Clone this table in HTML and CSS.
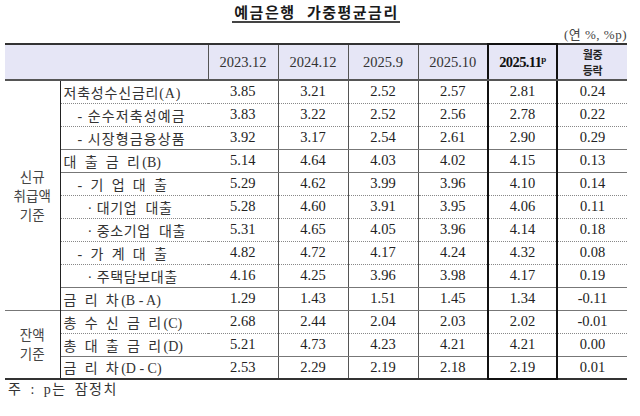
FILE: index.html
```html
<!DOCTYPE html>
<html lang="ko">
<head>
<meta charset="utf-8">
<title>예금은행 가중평균금리</title>
<link rel="stylesheet" href="styles.css">
</head>
<body>
<div class="page">
  <div class="title"><span class="title-text">예금은행&nbsp; 가중평균금리</span></div>
  <div class="unit">(연 %, %p)</div>
  <table class="rates">
    <colgroup>
      <col class="c-group"><col class="c-label">
      <col class="c-num"><col class="c-num"><col class="c-num"><col class="c-num"><col class="c-hl"><col class="c-num">
    </colgroup>
    <thead>
      <tr class="head">
        <th colspan="2" class="h-blank"></th>
        <th class="vs">2023.12</th>
        <th class="vs">2024.12</th>
        <th class="vs">2025.9</th>
        <th class="vd">2025.10</th>
        <th class="hl hl-top">2025.11<sup>p</sup></th>
        <th class="chg"><span class="chg-l">월중</span><span class="chg-l">등락</span></th>
      </tr>
    </thead>
    <tbody>
      <tr class="bd">
        <td rowspan="10" class="grp"><span class="grp-l">신규</span><span class="grp-l">취급액</span><span class="grp-l">기준</span></td>
        <td class="lbl ls08">저축성수신금리(A)</td>
        <td class="vs">3.85</td><td class="vs">3.21</td><td class="vs">2.52</td><td class="vd">2.57</td><td class="hl">2.81</td><td>0.24</td>
      </tr>
      <tr class="bd">
        <td class="lbl in1 ls1">- 순수저축성예금</td>
        <td class="vs">3.83</td><td class="vs">3.22</td><td class="vs">2.52</td><td class="vd">2.56</td><td class="hl">2.78</td><td>0.22</td>
      </tr>
      <tr class="bs">
        <td class="lbl in1 ls1">- 시장형금융상품</td>
        <td class="vs">3.92</td><td class="vs">3.17</td><td class="vs">2.54</td><td class="vd">2.61</td><td class="hl">2.90</td><td>0.29</td>
      </tr>
      <tr class="bs">
        <td class="lbl"><span class="ls2">대 출 금 리</span>(B)</td>
        <td class="vs">5.14</td><td class="vs">4.64</td><td class="vs">4.03</td><td class="vd">4.02</td><td class="hl">4.15</td><td>0.13</td>
      </tr>
      <tr class="bd">
        <td class="lbl in1 ls2">- 기 업 대 출</td>
        <td class="vs">5.29</td><td class="vs">4.62</td><td class="vs">3.99</td><td class="vd">3.96</td><td class="hl">4.10</td><td>0.14</td>
      </tr>
      <tr class="bd">
        <td class="lbl in2 ls05">· 대기업&nbsp; 대출</td>
        <td class="vs">5.28</td><td class="vs">4.60</td><td class="vs">3.91</td><td class="vd">3.95</td><td class="hl">4.06</td><td>0.11</td>
      </tr>
      <tr class="bd">
        <td class="lbl in2 ls05">· 중소기업&nbsp; 대출</td>
        <td class="vs">5.31</td><td class="vs">4.65</td><td class="vs">4.05</td><td class="vd">3.96</td><td class="hl">4.14</td><td>0.18</td>
      </tr>
      <tr class="bd">
        <td class="lbl in1 ls2">- 가 계 대 출</td>
        <td class="vs">4.82</td><td class="vs">4.72</td><td class="vs">4.17</td><td class="vd">4.24</td><td class="hl">4.32</td><td>0.08</td>
      </tr>
      <tr class="bs">
        <td class="lbl in2 ls05">· 주택담보대출</td>
        <td class="vs">4.16</td><td class="vs">4.25</td><td class="vs">3.96</td><td class="vd">3.98</td><td class="hl">4.17</td><td>0.19</td>
      </tr>
      <tr class="bs">
        <td class="lbl"><span class="ls2">금 리 차</span>(B - A)</td>
        <td class="vs">1.29</td><td class="vs">1.43</td><td class="vs">1.51</td><td class="vd">1.45</td><td class="hl">1.34</td><td>-0.11</td>
      </tr>
      <tr class="bd">
        <td rowspan="3" class="grp grp-top"><span class="grp-l">잔액</span><span class="grp-l">기준</span></td>
        <td class="lbl"><span class="ls2">총 수 신 금 리</span>(C)</td>
        <td class="vs">2.68</td><td class="vs">2.44</td><td class="vs">2.04</td><td class="vd">2.03</td><td class="hl">2.02</td><td>-0.01</td>
      </tr>
      <tr class="bs">
        <td class="lbl"><span class="ls2">총 대 출 금 리</span>(D)</td>
        <td class="vs">5.21</td><td class="vs">4.73</td><td class="vs">4.23</td><td class="vd">4.21</td><td class="hl">4.21</td><td>0.00</td>
      </tr>
      <tr class="last">
        <td class="lbl"><span class="ls2">금 리 차</span>(D - C)</td>
        <td class="vs">2.53</td><td class="vs">2.29</td><td class="vs">2.19</td><td class="vd">2.18</td><td class="hl hl-bot">2.19</td><td>0.01</td>
      </tr>
    </tbody>
  </table>
  <div class="note">주 : p는 잠정치</div>
</div>
</body>
</html>
```
FILE: styles.css
```css
html, body {
  margin: 0;
  padding: 0;
  background: #ffffff;
}
body {
  font-family: "Liberation Serif", "Noto Sans CJK KR", serif;
  color: #222;
}
.page {
  width: 622px;
  padding-left: 5px;
}
.title {
  height: 26px;
  display: flex;
  justify-content: center;
  align-items: flex-start;
}
.title-text {
  margin-top: 3px;
  font-family: "Noto Sans CJK KR", sans-serif;
  font-weight: 700;
  font-size: 15px;
  line-height: 18px;
  letter-spacing: 1.5px;
  color: #1a1a1a;
  border-bottom: 2px solid #444;
  padding: 0 1px 0 2px;
}
.unit {
  height: 17px;
  text-align: right;
  font-family: "Liberation Serif", "Noto Sans CJK KR", serif;
  font-size: 13px;
  line-height: 17px;
  color: #444;
  letter-spacing: 0.5px;
}
.rates {
  width: 622px;
  table-layout: fixed;
  border-collapse: collapse;
  border-top: 2px solid #333;
  border-bottom: 2px solid #333;
}
.c-group { width: 55px; }
.c-label { width: 148px; }
.c-num { width: 70px; }
.c-hl { width: 69px; }
.rates th, .rates td {
  padding: 0;
  text-align: center;
  font-size: 14.5px;
  font-weight: 400;
}
.head {
  height: 36px;
  background: #e6e6f6;
}
.head th {
  border-bottom: 2px solid #555;
  color: #333;
}
.h-blank {
  border-right: 1px solid #555;
}
.rates th.chg {
  font-family: "Noto Sans CJK KR", sans-serif;
  font-weight: 700;
  font-size: 11px;
  color: #222;
}
.chg-l {
  display: block;
  line-height: 16px;
  height: 16px;
  letter-spacing: -0.3px;
}
.hl {
  border-left: 2px solid #111;
  border-right: 2px solid #111;
}
th.hl {
  font-weight: 700;
  letter-spacing: -0.6px;
  color: #111;
}
th.hl sup {
  font-size: 9px;
  vertical-align: 5px;
  line-height: 0;
}
.hl-top { border-top: 2px solid #111; }
.hl-bot { border-bottom: 2px solid #111; }
.vs { border-right: 1px solid #555; }
.vd { border-right: 1px dotted #777; }
.rates tbody tr { height: 23px; }
.bd td { border-bottom: 1px dotted #888; }
.bs td { border-bottom: 1px solid #777; }
.rates tbody td.grp {
  border-bottom: none;
  border-right: 1px solid #222;
  font-family: "Noto Sans CJK KR", sans-serif;
  font-size: 13.5px;
  color: #444;
  vertical-align: middle;
}
.grp-l {
  display: block;
  line-height: 19px;
  height: 19px;
}
.rates tbody td.grp-top {
  border-top: 1px solid #777;
}
.rates td.lbl {
  text-align: left;
  padding-left: 3px;
  font-size: 14px;
  white-space: nowrap;
  color: #333;
}
.rates td.lbl.in1 { padding-left: 17px; }
.rates td.lbl.in2 { padding-left: 27px; }
.ls05 { letter-spacing: 0.6px; }
.ls08 { letter-spacing: 0.8px; }
.ls1 { letter-spacing: 1.1px; }
.ls2 { letter-spacing: 2.4px; }
.note {
  font-family: "Liberation Serif", "Noto Sans CJK KR", serif;
  font-size: 14px;
  line-height: 18px;
  padding: 1px 0 0 3px;
  color: #333;
  letter-spacing: 1.5px;
  word-spacing: 3px;
}
```
